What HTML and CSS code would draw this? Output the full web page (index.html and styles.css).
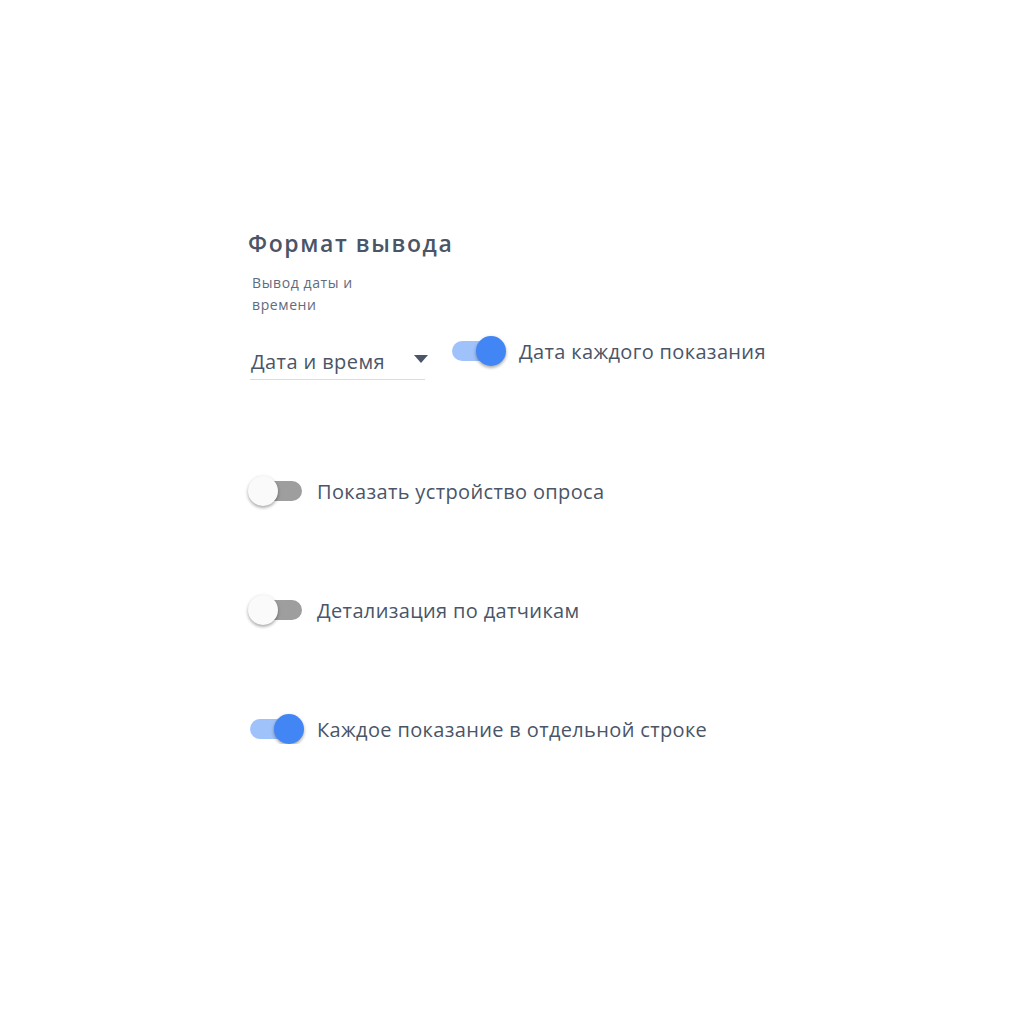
FILE: index.html
```html
<!DOCTYPE html>
<html lang="ru">
<head>
    <meta charset="UTF-8">
    <meta name="viewport" content="width=device-width, initial-scale=1.0">
    <title>Формат вывода</title>
    <link rel="stylesheet" href="styles.css">
</head>
<body>

    <div class="panel">
        <h2 class="title">Формат вывода</h2>

        <!-- Date/time select + first switch -->
        <div class="field-row">
            <div class="select-field">
                <div class="select-label">Вывод даты и времени</div>
                <div class="select-box">
                    <span class="select-value">Дата и время</span>
                    <span class="select-arrow"></span>
                </div>
            </div>
            <div class="toggle-row first">
                <div class="switch on">
                    <div class="track"></div>
                    <div class="thumb"></div>
                </div>
                <span class="toggle-label">Дата каждого показания</span>
            </div>
        </div>

        <div class="toggle-list">
            <div class="toggle-row">
                <div class="switch">
                    <div class="track"></div>
                    <div class="thumb"></div>
                </div>
                <span class="toggle-label">Показать устройство опроса</span>
            </div>
            <div class="toggle-row">
                <div class="switch">
                    <div class="track"></div>
                    <div class="thumb"></div>
                </div>
                <span class="toggle-label">Детализация по датчикам</span>
            </div>
            <div class="toggle-row">
                <div class="switch on">
                    <div class="track"></div>
                    <div class="thumb"></div>
                </div>
                <span class="toggle-label">Каждое показание в отдельной строке</span>
            </div>
        </div>
    </div>

</body>
</html>
```

FILE: styles.css
```css
body {
    margin: 0;
    background-color: #fff;
    font-family: 'Open Sans', 'Noto Sans', sans-serif;
    color: #4a5568;
}

.panel {
    padding: 228px 0 0 248px;
}

.title {
    margin: 0;
    font-size: 23px;
    font-weight: 600;
    letter-spacing: 1.6px;
    line-height: 30px;
    color: #4a5568;
}

.field-row {
    display: flex;
    align-items: flex-start;
    margin-top: 14px;
}

.select-field {
    width: 175px;
    margin-left: 2px;
}

.select-label {
    width: 130px;
    padding-left: 2px;
    font-size: 14px;
    letter-spacing: 0.6px;
    line-height: 22px;
    color: #5f6b7e;
}

.select-box {
    display: flex;
    justify-content: space-between;
    align-items: center;
    height: 35px;
    margin-top: 28px;
    border-bottom: 1px solid #dcdcdc;
}

.select-value {
    font-size: 20px;
    letter-spacing: 0.4px;
    padding-left: 1px;
}

.select-arrow {
    width: 0;
    height: 0;
    margin-right: -3px;
    margin-top: -6px;
    border-left: 7.5px solid transparent;
    border-right: 7.5px solid transparent;
    border-top: 8px solid #4a5568;
}

.toggle-row {
    display: flex;
    align-items: center;
    gap: 13px;
    height: 30px;
}

.toggle-row.first {
    margin-left: 25px;
    margin-top: 64px;
}

.toggle-list {
    display: flex;
    flex-direction: column;
    gap: 89px;
    margin-top: 96px;
}

.toggle-label {
    font-size: 20px;
    letter-spacing: 0.35px;
    white-space: nowrap;
}

/* switch: thumb sits over the track */
.switch {
    position: relative;
    width: 56px;
    height: 30px;
    flex-shrink: 0;
}

.track {
    position: absolute;
    left: 2px;
    top: 5px;
    width: 52px;
    height: 20px;
    border-radius: 10px;
    background-color: #9e9e9e;
}

.thumb {
    position: absolute;
    left: 0;
    top: 0;
    width: 30px;
    height: 30px;
    border-radius: 50%;
    background-color: #fafafa;
    box-shadow: 0 2px 3px rgba(0, 0, 0, 0.25), 0 1px 4px rgba(0, 0, 0, 0.12);
}

.switch.on .track {
    background-color: #a0c2fa;
}

.switch.on .thumb {
    left: 26px;
    background-color: #4285f4;
}
```
